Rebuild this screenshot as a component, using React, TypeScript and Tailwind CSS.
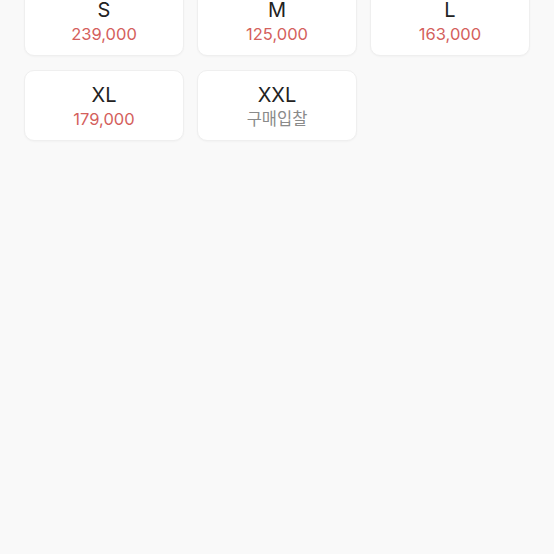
const sizes = [
  { size: "S", price: "239,000" },
  { size: "M", price: "125,000" },
  { size: "L", price: "163,000" },
  { size: "XL", price: "179,000" },
  { size: "XXL", price: null },
]

export default function App() {
  return (
    <div
      className="min-h-[554px] w-[554px] overflow-hidden bg-[#f9f9f9] px-[24px]"
      style={{ fontFamily: "Inter, 'Noto Sans CJK KR', sans-serif" }}
    >
      <div className="-mt-[15px] grid grid-cols-3 gap-x-[13px] gap-y-[14px]">
        {sizes.map((s) => (
          <div
            key={s.size}
            className="flex h-[71px] flex-col items-center rounded-[10px] border border-[#efefef] bg-white pt-[12px] shadow-[0_1px_2px_rgba(0,0,0,0.03)]"
          >
            <div className="text-[20px] leading-[24px] text-[#222]">{s.size}</div>
            <div
              className={
                s.price
                  ? "mt-[2px] text-[16.5px] leading-[20px] text-[#d4605c]"
                  : "mt-[2px] text-[16.5px] leading-[20px] text-[#8a8a8a]"
              }
            >
              {s.price ?? "구매입찰"}
            </div>
          </div>
        ))}
      </div>
    </div>
  )
}
